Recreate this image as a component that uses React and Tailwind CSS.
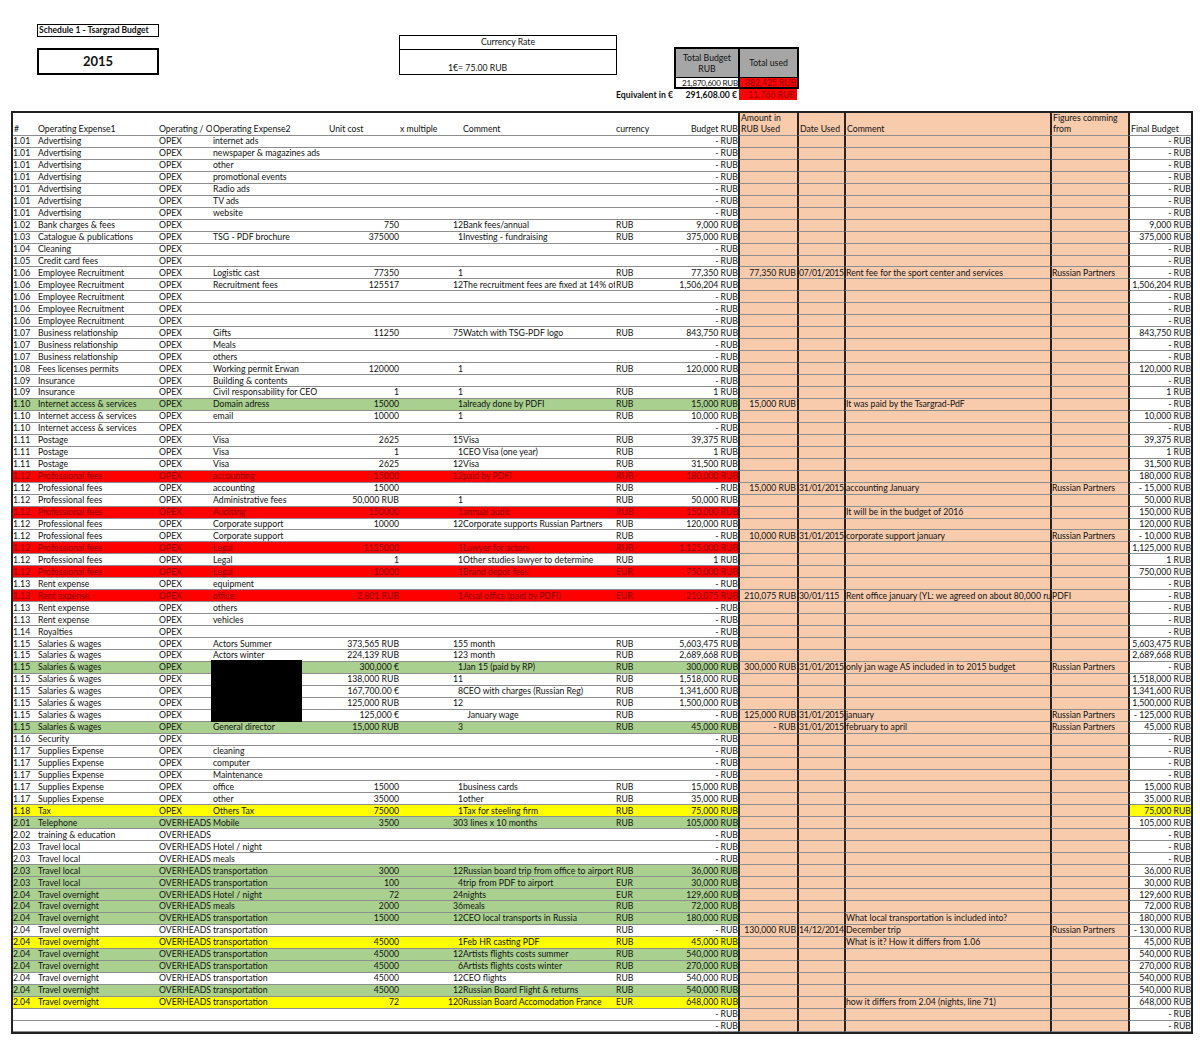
import React from 'react';

const W = ['w-[24px]','w-[121px]','w-[54px]','w-[117px]','w-[71px]','w-[63px]','w-[152px]','w-[57px]','w-[66px]','w-[59px]','w-[47px]','w-[206px]','w-[78px]','w-[63px]'];
const ALIGN = [
  'justify-start pl-0',
  'justify-start pl-[1px]',
  'justify-start pl-[1px]',
  'justify-start pl-[1px]',
  'justify-end pr-[1px]',
  'justify-end pr-0',
  'justify-start pl-0',
  'justify-start pl-[1px]',
  'justify-end pr-0',
  'justify-end pr-[1px]',
  'justify-start pl-0 tracking-[-0.35px]',
  'justify-start pl-0',
  'justify-start pl-0',
  'justify-end pr-0',
];
const D = '- RUB';

// [num, e1, type, e2, unit, mult, comment, cur, budget, used, date, c2, from, final, color]
const R = (num, e1, type, e2, unit='', mult='', comment='', cur='', budget=D, used='', date='', c2='', from='', final=D, color='') =>
  [num, e1, type, e2, unit, mult, comment, cur, budget, used, date, c2, from, final, color];

const AD = 'Advertising';
const ER = 'Employee Recruitment';
const BR = 'Business relationship';
const IA = 'Internet access & services';
const PF = 'Professional fees';
const RE = 'Rent expense';
const SW = 'Salaries & wages';
const SE = 'Supplies Expense';
const TL = 'Travel local';
const TO = 'Travel overnight';
const OH = 'OVERHEADS';
const OP = 'OPEX';
const RP = 'Russian Partners';

const rows = [
  R('1.01', AD, OP, 'internet ads'),
  R('1.01', AD, OP, 'newspaper & magazines ads'),
  R('1.01', AD, OP, 'other'),
  R('1.01', AD, OP, 'promotional events'),
  R('1.01', AD, OP, 'Radio ads'),
  R('1.01', AD, OP, 'TV ads'),
  R('1.01', AD, OP, 'website'),
  R('1.02', 'Bank charges & fees', OP, '', '750', '12', 'Bank fees/annual', 'RUB', '9,000 RUB', '', '', '', '', '9,000 RUB'),
  R('1.03', 'Catalogue & publications', OP, 'TSG - PDF brochure', '375000', '1', 'Investing - fundraising', 'RUB', '375,000 RUB', '', '', '', '', '375,000 RUB'),
  R('1.04', 'Cleaning', OP, ''),
  R('1.05', 'Credit card fees', OP, ''),
  R('1.06', ER, OP, 'Logistic cast', '77350', '1', '', 'RUB', '77,350 RUB', '77,350 RUB', '07/01/2015', 'Rent fee for the sport center and services', RP, D),
  R('1.06', ER, OP, 'Recruitment fees', '125517', '12', 'The recruitment fees are fixed at 14% of the salary', 'RUB', '1,506,204 RUB', '', '', '', '', '1,506,204 RUB'),
  R('1.06', ER, OP, ''),
  R('1.06', ER, OP, ''),
  R('1.06', ER, OP, ''),
  R('1.07', BR, OP, 'Gifts', '11250', '75', 'Watch with TSG-PDF logo', 'RUB', '843,750 RUB', '', '', '', '', '843,750 RUB'),
  R('1.07', BR, OP, 'Meals'),
  R('1.07', BR, OP, 'others'),
  R('1.08', 'Fees licenses permits', OP, 'Working permit Erwan', '120000', '1', '', 'RUB', '120,000 RUB', '', '', '', '', '120,000 RUB'),
  R('1.09', 'Insurance', OP, 'Building & contents'),
  R('1.09', 'Insurance', OP, 'Civil responsability for CEO', '1', '1', '', 'RUB', '1 RUB', '', '', '', '', '1 RUB'),
  R('1.10', IA, OP, 'Domain adress', '15000', '1', 'already done by PDFI', 'RUB', '15,000 RUB', '15,000 RUB', '', 'It was paid by the Tsargrad-PdF', '', D, 'g'),
  R('1.10', IA, OP, 'email', '10000', '1', '', 'RUB', '10,000 RUB', '', '', '', '', '10,000 RUB'),
  R('1.10', IA, OP, ''),
  R('1.11', 'Postage', OP, 'Visa', '2625', '15', 'Visa', 'RUB', '39,375 RUB', '', '', '', '', '39,375 RUB'),
  R('1.11', 'Postage', OP, 'Visa', '1', '1', 'CEO Visa (one year)', 'RUB', '1 RUB', '', '', '', '', '1 RUB'),
  R('1.11', 'Postage', OP, 'Visa', '2625', '12', 'Visa', 'RUB', '31,500 RUB', '', '', '', '', '31,500 RUB'),
  R('1.12', PF, OP, 'accounting', '15000', '12', 'paid by PDFI', 'RUB', '180,000 RUB', '', '', '', '', '180,000 RUB', 'r'),
  R('1.12', PF, OP, 'accounting', '15000', '', '', 'RUB', D, '15,000 RUB', '31/01/2015', 'accounting January', RP, '- 15,000 RUB'),
  R('1.12', PF, OP, 'Administrative fees', '50,000 RUB', '1', '', 'RUB', '50,000 RUB', '', '', '', '', '50,000 RUB'),
  R('1.12', PF, OP, 'Auditing', '150000', '1', 'annual audit', 'RUB', '150,000 RUB', '', '', 'It will be in the budget of 2016', '', '150,000 RUB', 'r'),
  R('1.12', PF, OP, 'Corporate support', '10000', '12', 'Corporate supports Russian Partners', 'RUB', '120,000 RUB', '', '', '', '', '120,000 RUB'),
  R('1.12', PF, OP, 'Corporate support', '', '', '', 'RUB', D, '10,000 RUB', '31/01/2015', 'corporate support january', RP, '- 10,000 RUB'),
  R('1.12', PF, OP, 'Legal', '1125000', '1', 'Lawyer for actors', 'RUB', '1,125,000 RUB', '', '', '', '', '1,125,000 RUB', 'r'),
  R('1.12', PF, OP, 'Legal', '1', '1', 'Other studies lawyer to determine', 'RUB', '1 RUB', '', '', '', '', '1 RUB'),
  R('1.12', PF, OP, 'Legal', '10000', '1', 'Brand depot fees', 'EUR', '750,000 RUB', '', '', '', '', '750,000 RUB', 'r'),
  R('1.13', RE, OP, 'equipment'),
  R('1.13', RE, OP, 'office', '2,801 RUB', '1', 'Atsal office (paid by PDFI)', 'EUR', '210,075 RUB', '210,075 RUB', '30/01/115', 'Rent office january (YL: we agreed on about 80,000 rubles)', 'PDFI', D, 'r'),
  R('1.13', RE, OP, 'others'),
  R('1.13', RE, OP, 'vehicles'),
  R('1.14', 'Royalties', OP, ''),
  R('1.15', SW, OP, 'Actors Summer', '373,565 RUB', '15', '5 month', 'RUB', '5,603,475 RUB', '', '', '', '', '5,603,475 RUB'),
  R('1.15', SW, OP, 'Actors winter', '224,139 RUB', '12', '3 month', 'RUB', '2,689,668 RUB', '', '', '', '', '2,689,668 RUB'),
  R('1.15', SW, OP, '', '300,000 €', '1', 'Jan 15 (paid by RP)', 'RUB', '300,000 RUB', '300,000 RUB', '31/01/2015', 'only jan wage AS included in to 2015 budget', RP, D, 'g'),
  R('1.15', SW, OP, '', '138,000 RUB', '11', '', 'RUB', '1,518,000 RUB', '', '', '', '', '1,518,000 RUB'),
  R('1.15', SW, OP, '', '167,700.00 €', '8', 'CEO with charges (Russian Reg)', 'RUB', '1,341,600 RUB', '', '', '', '', '1,341,600 RUB'),
  R('1.15', SW, OP, '', '125,000 RUB', '12', '', 'RUB', '1,500,000 RUB', '', '', '', '', '1,500,000 RUB'),
  R('1.15', SW, OP, '', '125,000 €', '', '\u00a0\u00a0January wage', 'RUB', D, '125,000 RUB', '31/01/2015', 'january', RP, '- 125,000 RUB'),
  R('1.15', SW, OP, 'General director', '15,000 RUB', '3', '', 'RUB', '45,000 RUB', D, '31/01/2015', 'february to april', RP, '45,000 RUB', 'g'),
  R('1.16', 'Security', OP, ''),
  R('1.17', SE, OP, 'cleaning'),
  R('1.17', SE, OP, 'computer'),
  R('1.17', SE, OP, 'Maintenance'),
  R('1.17', SE, OP, 'office', '15000', '1', 'business cards', 'RUB', '15,000 RUB', '', '', '', '', '15,000 RUB'),
  R('1.17', SE, OP, 'other', '35000', '1', 'other', 'RUB', '35,000 RUB', '', '', '', '', '35,000 RUB'),
  R('1.18', 'Tax', OP, 'Others Tax', '75000', '1', 'Tax for steeling firm', 'RUB', '75,000 RUB', '', '', '', '', '75,000 RUB', 'Y'),
  R('2.01', 'Telephone', OH, 'Mobile', '3500', '30', '3 lines x 10 months', 'RUB', '105,000 RUB', '', '', '', '', '105,000 RUB', 'g'),
  R('2.02', 'training & education', OH, ''),
  R('2.03', TL, OH, 'Hotel / night'),
  R('2.03', TL, OH, 'meals'),
  R('2.03', TL, OH, 'transportation', '3000', '12', 'Russian board trip from office to airport', 'RUB', '36,000 RUB', '', '', '', '', '36,000 RUB', 'g'),
  R('2.03', TL, OH, 'transportation', '100', '4', 'trip from PDF to airport', 'EUR', '30,000 RUB', '', '', '', '', '30,000 RUB', 'g'),
  R('2.04', TO, OH, 'Hotel / night', '72', '24', 'nights', 'EUR', '129,600 RUB', '', '', '', '', '129,600 RUB', 'g'),
  R('2.04', TO, OH, 'meals', '2000', '36', 'meals', 'RUB', '72,000 RUB', '', '', '', '', '72,000 RUB', 'g'),
  R('2.04', TO, OH, 'transportation', '15000', '12', 'CEO local transports in Russia', 'RUB', '180,000 RUB', '', '', 'What local transportation is included into?', '', '180,000 RUB', 'g'),
  R('2.04', TO, OH, 'transportation', '', '', '', 'RUB', D, '130,000 RUB', '14/12/2014', 'December trip', RP, '- 130,000 RUB'),
  R('2.04', TO, OH, 'transportation', '45000', '1', 'Feb HR casting PDF', 'RUB', '45,000 RUB', '', '', 'What is it? How it differs from 1.06', '', '45,000 RUB', 'y'),
  R('2.04', TO, OH, 'transportation', '45000', '12', 'Artists flights costs summer', 'RUB', '540,000 RUB', '', '', '', '', '540,000 RUB', 'g'),
  R('2.04', TO, OH, 'transportation', '45000', '6', 'Artists flights costs winter', 'RUB', '270,000 RUB', '', '', '', '', '270,000 RUB', 'g'),
  R('2.04', TO, OH, 'transportation', '45000', '12', 'CEO flights', 'RUB', '540,000 RUB', '', '', '', '', '540,000 RUB'),
  R('2.04', TO, OH, 'transportation', '45000', '12', 'Russian Board Flight & returns', 'RUB', '540,000 RUB', '', '', '', '', '540,000 RUB', 'g'),
  R('2.04', TO, OH, 'transportation', '72', '120', 'Russian Board Accomodation France', 'EUR', '648,000 RUB', '', '', 'how it differs from 2.04 (nights, line 71)', '', '648,000 RUB', 'y'),
  R('', '', '', ''),
  R('', '', '', ''),
];

function rowBg(color) {
  if (color === 'g') return 'bg-[#a9d08e]';
  if (color === 'r') return 'bg-[#ff0000] text-[#8a0000]';
  if (color === 'y' || color === 'Y') return 'bg-[#ffff00]';
  return 'bg-white';
}

function Row({ r }) {
  const color = r[14];
  return (
    <div className="flex h-[11.96px]">
      {r.slice(0, 14).map((v, i) => {
        let bg;
        if (i < 9) bg = rowBg(color);
        else if (i < 13) bg = 'bg-[#f8cbad]';
        else bg = color === 'Y' ? 'bg-[#ffff00]' : 'bg-white';
        const bl = i >= 9 ? 'border-l-2 border-l-[#2a211c]' : '';
        return (
          <div
            key={i}
            className={`${W[i]} ${bg} ${bl} ${ALIGN[i]} flex h-full shrink-0 items-center overflow-hidden whitespace-pre border-b border-b-[#8e8e8e] text-[8.7px] leading-[10px]`}
          >
            {v}
          </div>
        );
      })}
    </div>
  );
}

const headers = ['#', 'Operating Expense1', 'Operating / Operating Expense', 'Operating Expense2', 'Unit cost', 'x multiple', 'Comment', 'currency', 'Budget RUB', 'Amount in\nRUB Used', 'Date Used', 'Comment', 'Figures comming\nfrom', 'Final Budget'];

function Header() {
  return (
    <div className="flex h-[23px]">
      {headers.map((h, i) => {
        const bg = i >= 9 && i < 13 ? 'bg-[#f8cbad]' : 'bg-white';
        const bl = i >= 9 ? 'border-l-2 border-l-[#2a211c]' : '';
        const al = i === 8 ? 'justify-end pr-0' : i === 4 || i === 5 || i === 6 ? 'justify-start pl-0' : 'justify-start pl-[1px]';
        return (
          <div
            key={i}
            className={`${W[i]} ${bg} ${bl} ${al} flex h-full shrink-0 items-end overflow-hidden whitespace-pre border-b border-b-[#8e8e8e] pb-[1px] text-[8.7px] leading-[11px]`}
          >
            {h}
          </div>
        );
      })}
    </div>
  );
}

export default function App() {
  return (
    <div className="relative min-h-[1040px] w-[1200px] bg-white text-[#111] [font-family:Lato,'Open_Sans',sans-serif]">
      {/* Top area */}
      <div className="flex h-[111px] items-start">
        <div className="ml-[37px] mt-[24px] flex w-[122px] flex-col">
          <div className="h-[13px] overflow-hidden whitespace-nowrap border-[1.5px] border-black pl-[1px] text-[8.5px] font-bold leading-[10px]">
            Schedule 1 - Tsargrad Budget
          </div>
          <div className="mt-[11px] flex h-[27px] items-center justify-center border-2 border-black text-[13px] font-bold">
            2015
          </div>
        </div>
        <div className="ml-[240px] mt-[35px] flex h-[40px] w-[218px] flex-col border-[1.5px] border-black">
          <div className="h-[14px] border-b-[1.5px] border-black text-center text-[8.7px] leading-[12px]">Currency Rate</div>
          <div className="flex flex-1 items-end pb-[1px] pl-[48px] text-[8.7px] leading-[10px]">1€= 75.00 RUB</div>
        </div>
        <div className="ml-[-1px] mt-[47px] flex w-[183px] flex-col">
          <div className="ml-[58px] flex w-[125px] border-2 border-black">
            <div className="flex w-[64px] flex-col border-r-2 border-black">
              <div className="flex h-[28px] items-center justify-center bg-[#a6a6a6] text-center text-[8.7px] leading-[11px]">
                Total Budget<br />RUB
              </div>
              <div className="flex h-[10px] items-center justify-end overflow-hidden whitespace-nowrap border-t border-black bg-white text-[8px] leading-[10px] tracking-[-0.2px]">
                21,870,600 RUB
              </div>
            </div>
            <div className="flex flex-1 flex-col">
              <div className="flex h-[28px] items-center justify-center bg-[#a6a6a6] text-[8.7px]">Total used</div>
              <div className="flex h-[10px] items-center justify-end overflow-hidden whitespace-nowrap border-t border-black bg-[#ff0000] pr-[1px] text-[8.5px] leading-[10px] text-[#8a0000]">
                882,425 RUB
              </div>
            </div>
          </div>
          <div className="flex h-[11px] items-center text-[8.7px] leading-[10px]">
            <div className="w-[58px] whitespace-nowrap pr-[2px] text-right font-bold">Equivalent in €</div>
            <div className="w-[65px] whitespace-nowrap pr-[2px] text-right font-bold">291,608.00 €</div>
            <div className="flex h-full w-[58px] items-center justify-end bg-[#ff0000] pr-[2px] text-[#8a0000]">
              11,766 RUB
            </div>
          </div>
        </div>
      </div>

      {/* Table */}
      <div className="relative ml-[11px] w-[1182px] border-2 border-[#222]">
        <Header />
        {rows.map((r, i) => (
          <Row key={i} r={r} />
        ))}
        <div className="absolute left-[198px] top-[547px] h-[62px] w-[91px] bg-black" />
      </div>
    </div>
  );
}
